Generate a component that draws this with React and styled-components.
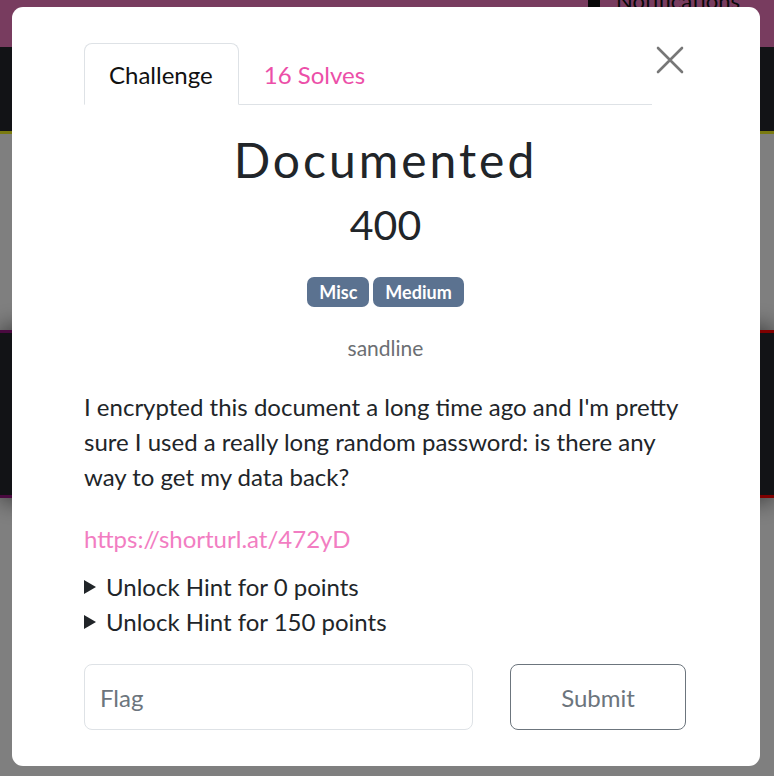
import React from "react";
import styled, { createGlobalStyle } from "styled-components";

const Global = createGlobalStyle`
  html, body { margin: 0; padding: 0; }
  body {
    width: 774px;
    height: 776px;
    overflow: hidden;
    font-family: Lato, "Noto Sans", "Liberation Sans", sans-serif;
    background: #ffffff;
  }
`;

const Page = styled.div`
  display: flex;
  flex-direction: column;
  height: 776px;
`;

const Header = styled.header`
  height: 47px;
  background: #f078be;
  display: flex;
  justify-content: flex-end;
  align-items: flex-start;
  padding-right: 34px;
  overflow: hidden;
`;

const NavItem = styled.span`
  display: flex;
  align-items: center;
  gap: 16px;
  margin-top: -13px;
  font-size: 22px;
  color: #111;
`;

const Bell = styled.span`
  width: 12px;
  height: 22px;
  background: #111;
  border-radius: 6px 6px 2px 2px;
`;

const Band = styled.div`
  height: 84px;
  background: #24262c;
  border-bottom: 3px solid #f4f420;
`;

const Spacer = styled.div`
  height: 196px;
`;

const CardRow = styled.div`
  display: flex;
  justify-content: space-between;
`;

const Card = styled.div`
  width: 40px;
  height: 162px;
  background: #24262c;
  border-top: 3px solid ${(p) => p.$edge};
  border-bottom: 3px solid ${(p) => p.$edge};
  box-shadow: 0 -6px 22px rgba(0, 0, 0, 0.35), 0 6px 22px rgba(0, 0, 0, 0.35);
`;

const Backdrop = styled.div`
  position: fixed;
  inset: 0;
  background: rgba(0, 0, 0, 0.5);
`;

const Modal = styled.div`
  position: fixed;
  left: 12px;
  top: 7px;
  width: 748px;
  height: 759px;
  box-sizing: border-box;
  background: #fff;
  border-radius: 11px;
  padding: 36px 73px 0 72px;
  display: flex;
  flex-direction: column;
  color: #212529;
`;

const TopRow = styled.div`
  display: flex;
  align-items: flex-start;
`;

const Tabs = styled.nav`
  display: flex;
  width: 568px;
  flex-shrink: 0;
  border-bottom: 1px solid #dee2e6;
`;

const Tab = styled.div`
  height: 62px;
  box-sizing: border-box;
  padding: 0 25px 0 24px;
  display: flex;
  align-items: center;
  font-size: 24px;
  margin-bottom: -1px;
  border: 1px solid ${(p) => (p.$active ? "#dee2e6" : "transparent")};
  border-bottom-color: ${(p) => (p.$active ? "#fff" : "transparent")};
  border-radius: 8px 8px 0 0;
  background: ${(p) => (p.$active ? "#fff" : "transparent")};
  color: ${(p) => (p.$active ? "#111" : "#ec4fa8")};
`;

const Close = styled.button`
  margin-left: 1px;
  margin-top: 0;
  width: 34px;
  height: 34px;
  flex-shrink: 0;
  padding: 0;
  border: none;
  background: transparent;
  display: flex;
  align-items: center;
  justify-content: center;
`;

const Title = styled.h1`
  margin: 26px 0 0;
  text-align: center;
  font-size: 48px;
  font-weight: 400;
  letter-spacing: 3px;
  line-height: 58px;
  color: #212529;
`;

const Points = styled.div`
  text-align: center;
  font-size: 41px;
  line-height: 48px;
  margin-top: 12px;
  color: #212529;
`;

const Badges = styled.div`
  display: flex;
  justify-content: center;
  gap: 4px;
  margin-top: 28px;
`;

const Badge = styled.span`
  height: 30px;
  padding: 0 12px;
  border-radius: 7px;
  background: #5b7290;
  color: #fff;
  font-weight: 700;
  font-size: 18px;
  display: flex;
  align-items: center;
`;

const Author = styled.div`
  text-align: center;
  margin-top: 28px;
  font-size: 21px;
  color: #6c6f73;
`;

const Description = styled.p`
  margin: 29px 0 0;
  font-size: 24px;
  line-height: 35px;
  color: #212529;
`;

const Link = styled.a`
  display: block;
  margin-top: 30px;
  font-size: 24px;
  line-height: 30px;
  color: #f27dc2;
  text-decoration: none;
`;

const Hints = styled.div`
  margin-top: 15px;
  display: flex;
  flex-direction: column;
`;

const Hint = styled.div`
  display: flex;
  align-items: center;
  gap: 10px;
  height: 35px;
  font-size: 24px;
  color: #212529;
`;

const Arrow = styled.span`
  width: 0;
  height: 0;
  border-top: 7px solid transparent;
  border-bottom: 7px solid transparent;
  border-left: 12px solid #212529;
`;

const Form = styled.form`
  margin-top: 25px;
  display: grid;
  grid-template-columns: 389px 176px;
  justify-content: space-between;
  width: 602px;
`;

const Input = styled.input`
  height: 66px;
  box-sizing: border-box;
  border: 1px solid #dee2e6;
  border-radius: 8px;
  padding: 0 15px;
  font-family: inherit;
  font-size: 24px;
  color: #495057;
  outline: none;
  &::placeholder { color: #6c757d; }
`;

const Submit = styled.button`
  height: 66px;
  box-sizing: border-box;
  border: 1px solid #6c757d;
  border-radius: 8px;
  background: #fff;
  font-family: inherit;
  font-size: 24px;
  color: #6c757d;
`;

export default function App() {
  return (
    <>
      <Global />
      <Page>
        <Header>
          <NavItem>
            <Bell />
            Notifications
          </NavItem>
        </Header>
        <Band />
        <Spacer />
        <CardRow>
          <Card $edge="#941480" />
          <Card $edge="#ff0000" />
        </CardRow>
      </Page>
      <Backdrop />
      <Modal>
        <TopRow>
          <Tabs>
            <Tab $active>Challenge</Tab>
            <Tab>16 Solves</Tab>
          </Tabs>
          <Close aria-label="Close">
            <svg width="28" height="28" viewBox="0 0 28 28">
              <path d="M2 2 L26 26 M26 2 L2 26" stroke="#777" strokeWidth="2.6" strokeLinecap="round" />
            </svg>
          </Close>
        </TopRow>
        <Title>Documented</Title>
        <Points>400</Points>
        <Badges>
          <Badge>Misc</Badge>
          <Badge>Medium</Badge>
        </Badges>
        <Author>sandline</Author>
        <Description>
          I encrypted this document a long time ago and I'm pretty sure I used a really long random password: is there any way to get my data back?
        </Description>
        <Link href="#">https://shorturl.at/472yD</Link>
        <Hints>
          <Hint><Arrow />Unlock Hint for 0 points</Hint>
          <Hint><Arrow />Unlock Hint for 150 points</Hint>
        </Hints>
        <Form onSubmit={(e) => e.preventDefault()}>
          <Input placeholder="Flag" />
          <Submit type="submit">Submit</Submit>
        </Form>
      </Modal>
    </>
  );
}
